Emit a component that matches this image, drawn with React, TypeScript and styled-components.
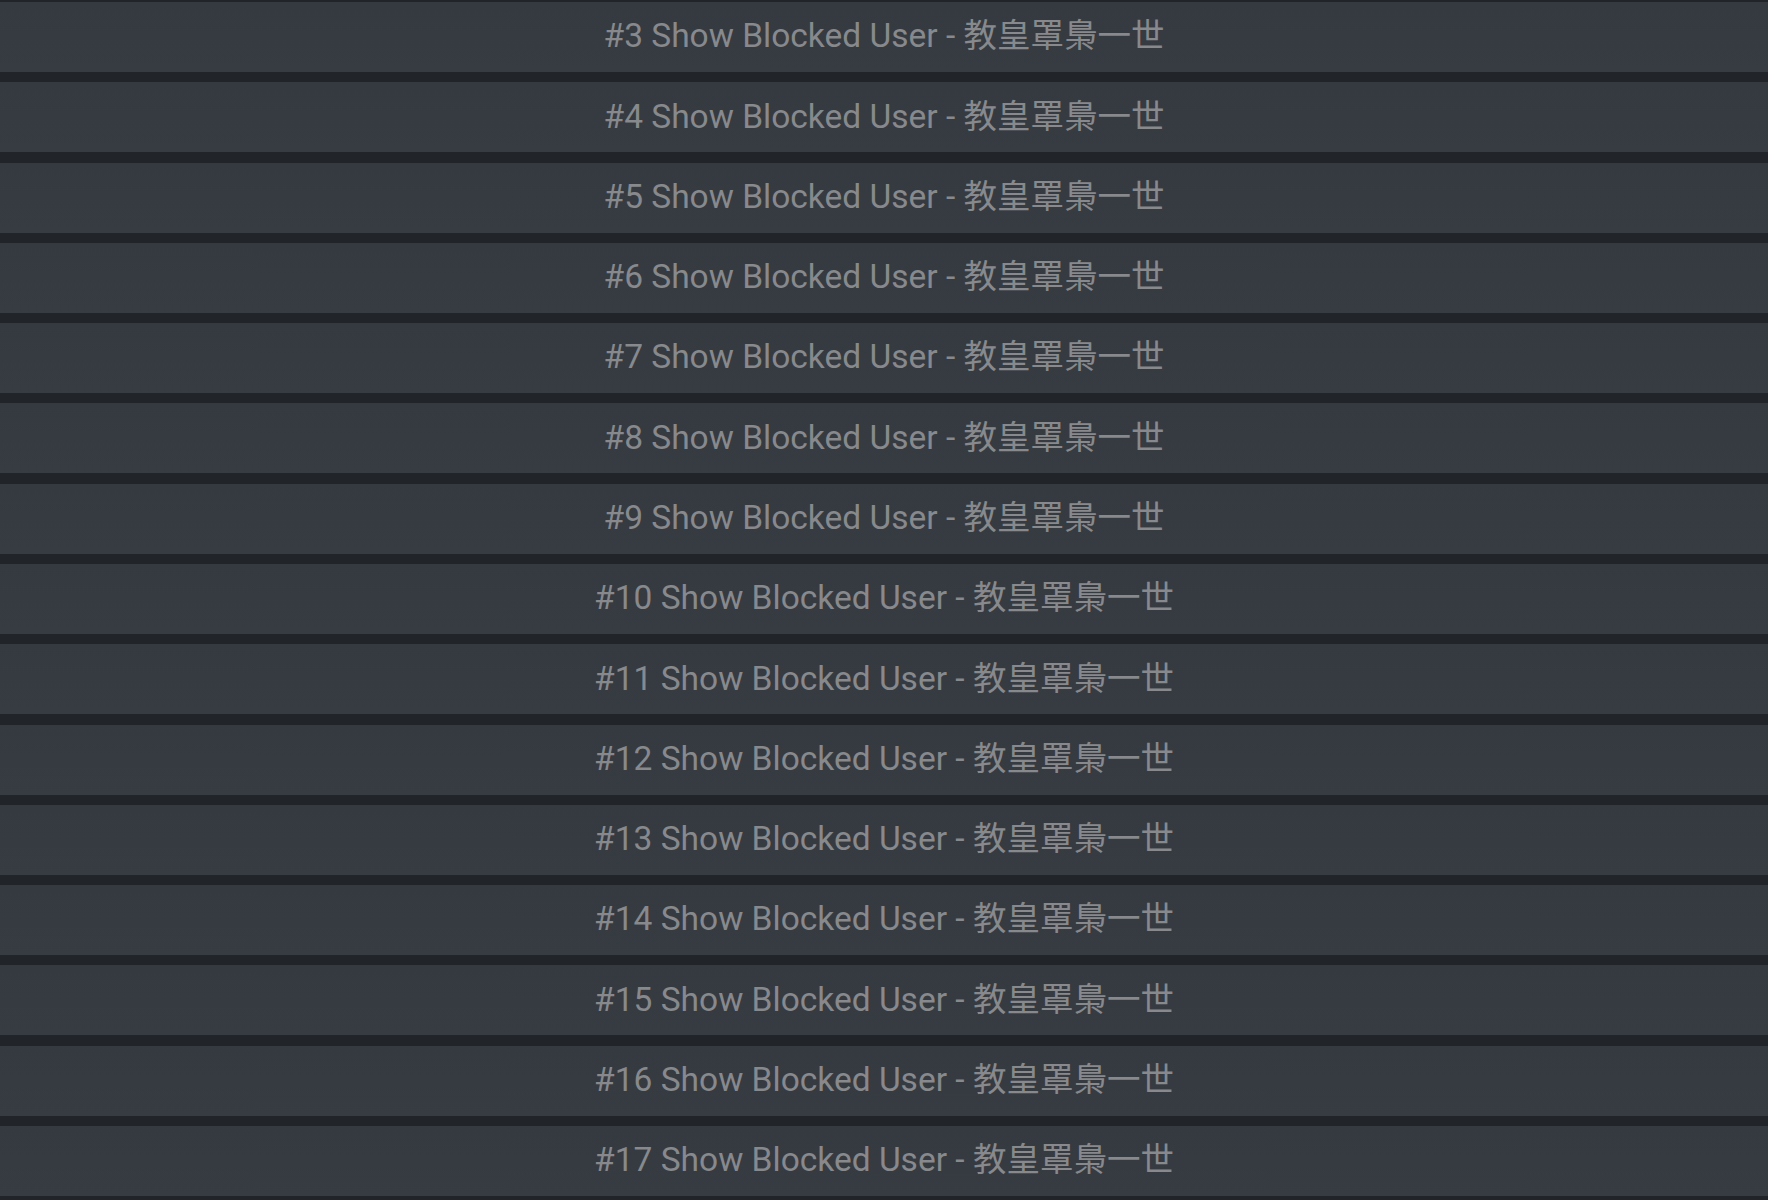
import styled, { createGlobalStyle } from "styled-components";

const GlobalStyle = createGlobalStyle`
  html, body {
    margin: 0;
    padding: 0;
    background: #212429;
  }
`;

const List = styled.div`
  display: flex;
  flex-direction: column;
  gap: 10.29px;
  padding-top: 2px;
  height: 1200px;
  overflow: hidden;
  background: #212429;
`;

const Row = styled.div`
  flex: 0 0 70px;
  box-sizing: border-box;
  display: flex;
  align-items: center;
  justify-content: center;
  padding-bottom: 2px;
  background: linear-gradient(#353a41, #373b42);
  color: #87898c;
  font-family: Roboto, "Noto Sans CJK TC", sans-serif;
  font-size: 33.5px;
  line-height: 1;
  white-space: nowrap;
`;

const ids = Array.from({ length: 15 }, (_, i) => i + 3);

const App = () => {
  return (
    <>
      <GlobalStyle />
      <List>
        {ids.map((id) => (
          <Row key={id}>#{id} Show Blocked User - 教皇罩梟一世</Row>
        ))}
      </List>
    </>
  );
};

export default App;
